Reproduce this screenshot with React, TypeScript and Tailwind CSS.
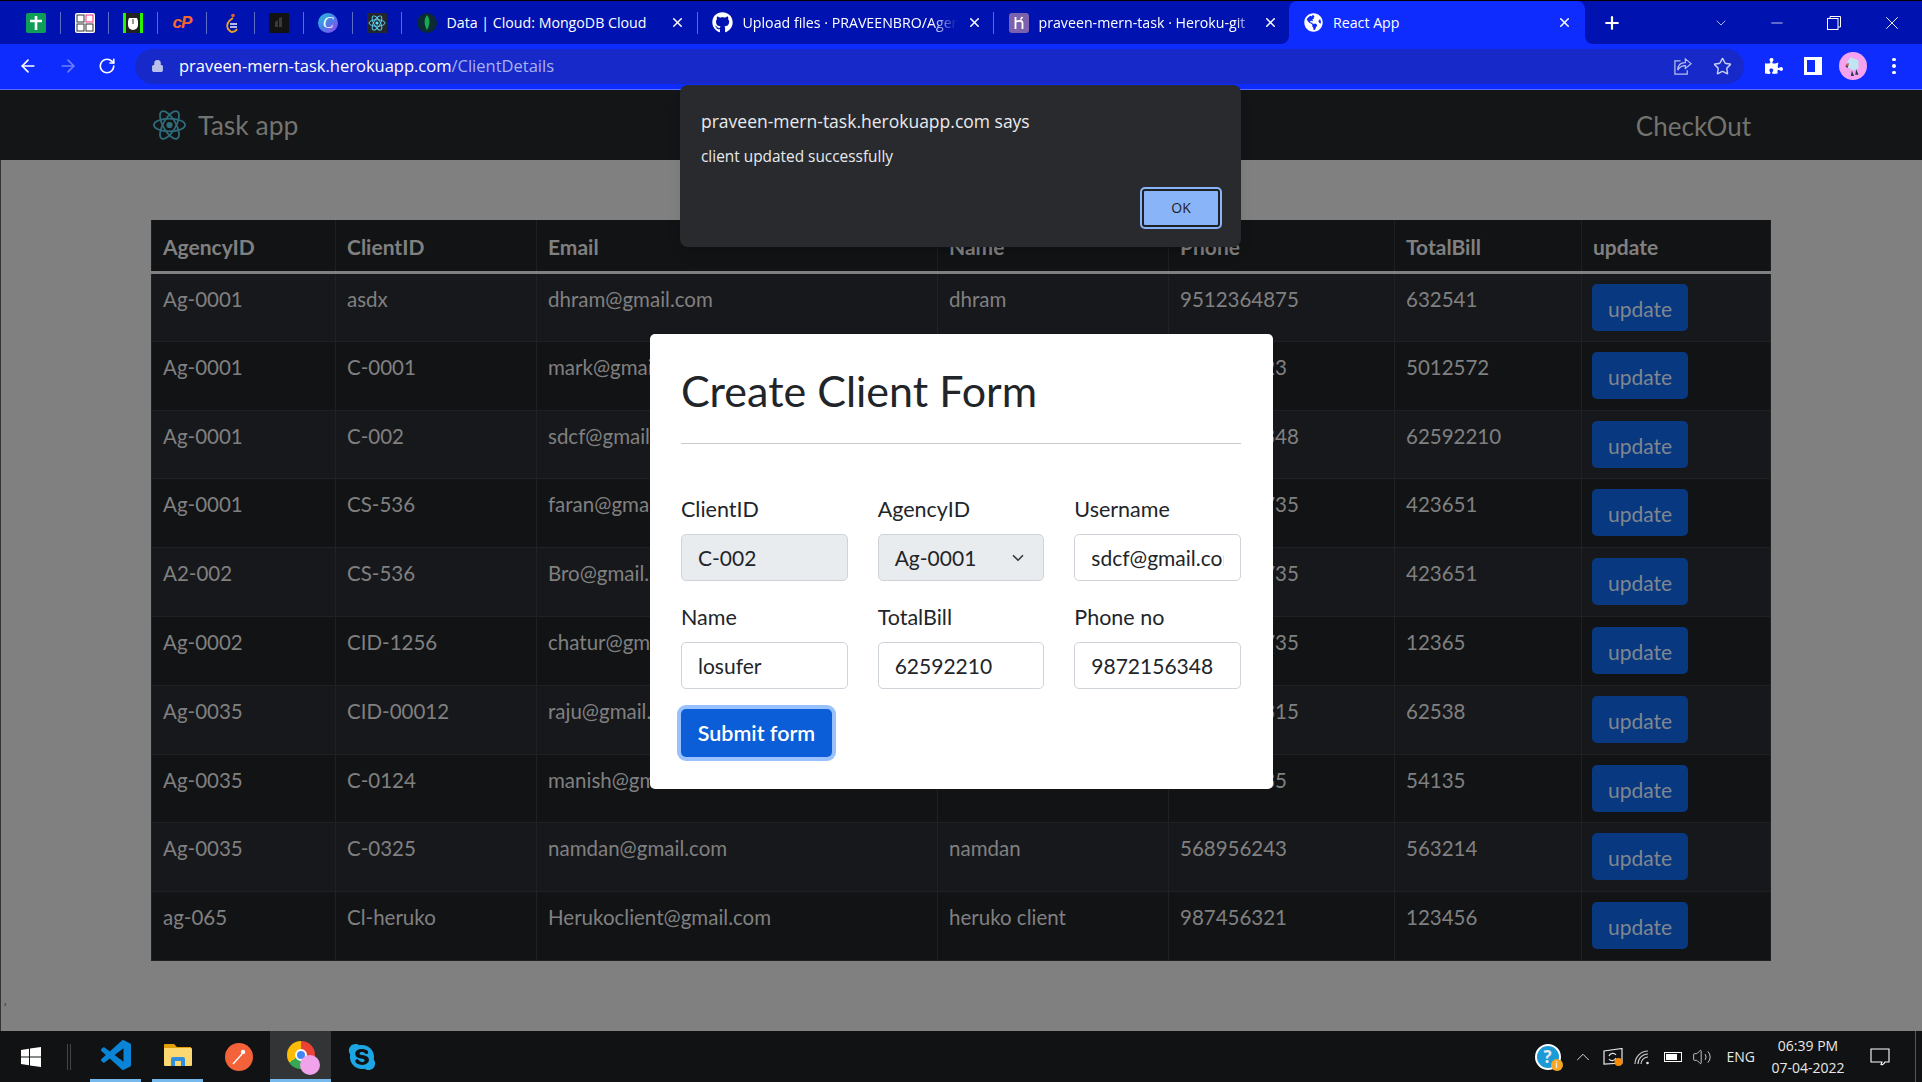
import { ArrowLeft, ArrowRight, ChevronDown, ChevronUp, Lock, Minus, Plus, RotateCw, Star, Volume2, X } from 'lucide-react'
import { FaGithub, FaGlobeAmericas, FaPuzzlePiece, FaSkype } from 'react-icons/fa'

const rows = [
  ['Ag-0001', 'asdx', 'dhram@gmail.com', 'dhram', '9512364875', '632541'],
  ['Ag-0001', 'C-0001', 'mark@gmail.com', 'mark', '987654323', '5012572'],
  ['Ag-0001', 'C-002', 'sdcf@gmail.com', 'losufer', '9872156348', '62592210'],
  ['Ag-0001', 'CS-536', 'faran@gmail.com', 'faran', '9856214735', '423651'],
  ['A2-002', 'CS-536', 'Bro@gmail.com', 'bro', '9856214735', '423651'],
  ['Ag-0002', 'CID-1256', 'chatur@gmail.com', 'chatur', '9856214735', '12365'],
  ['Ag-0035', 'CID-00012', 'raju@gmail.com', 'raju', '9856214315', '62538'],
  ['Ag-0035', 'C-0124', 'manish@gmail.com', 'manish', '985621435', '54135'],
  ['Ag-0035', 'C-0325', 'namdan@gmail.com', 'namdan', '568956243', '563214'],
  ['ag-065', 'Cl-heruko', 'Herukoclient@gmail.com', 'heruko client', '987456321', '123456'],
]

const headers = ['AgencyID', 'ClientID', 'Email', 'Name', 'Phone', 'TotalBill', 'update']

function Atom({ color, className }: { color: string; className?: string }) {
  return (
    <svg viewBox="0 0 36 36" className={className} fill="none" stroke={color} strokeWidth="1.8">
      <ellipse cx="18" cy="18" rx="16" ry="6.5" />
      <ellipse cx="18" cy="18" rx="16" ry="6.5" transform="rotate(60 18 18)" />
      <ellipse cx="18" cy="18" rx="16" ry="6.5" transform="rotate(120 18 18)" />
      <circle cx="18" cy="18" r="3.2" fill={color} stroke="none" />
    </svg>
  )
}

function PinnedTab({ children }: { children: React.ReactNode }) {
  return (
    <div className="flex h-[22px] w-[48.7px] items-center justify-center border-r border-[#5f6bc8]">
      {children}
    </div>
  )
}

function PinnedIcons() {
  return (
    <>
      <PinnedTab>
        <svg viewBox="0 0 20 20" className="h-5 w-5">
          <rect width="20" height="20" rx="2" fill="#0f9d58" />
          <path d="M10 3v14M4 8h12" stroke="#fff" strokeWidth="2.6" />
        </svg>
      </PinnedTab>
      <PinnedTab>
        <svg viewBox="0 0 20 20" className="h-5 w-5">
          <rect width="20" height="20" rx="2" fill="#fff" />
          <rect x="2" y="2" width="7" height="7" fill="none" stroke="#333" />
          <rect x="11" y="2" width="7" height="7" fill="none" stroke="#ef2d8a" />
          <rect x="2" y="11" width="7" height="7" fill="none" stroke="#333" />
          <rect x="11" y="11" width="7" height="7" fill="none" stroke="#333" />
        </svg>
      </PinnedTab>
      <PinnedTab>
        <svg viewBox="0 0 20 20" className="h-5 w-5">
          <rect width="20" height="20" fill="#27f500" />
          <rect x="3" y="0" width="14" height="20" fill="#222" />
          <path d="M5 8l1-3h8l1 3v4a5 5 0 0 1-10 0z" fill="#fff" />
          <path d="M10 6v5" stroke="#333" />
        </svg>
      </PinnedTab>
      <PinnedTab>
        <span className="font-['Liberation_Sans',sans-serif] text-[17px] leading-5 font-bold tracking-[-1px] text-[#f4692b] italic">cP</span>
      </PinnedTab>
      <PinnedTab>
        <svg viewBox="0 0 20 20" className="h-5 w-5" fill="none" strokeWidth="1.8">
          <circle cx="12" cy="2.5" r="1.8" fill="#e2622b" />
          <path d="M12 5C7 8 5 12 7 16l3 3" stroke="#f0a323" />
          <path d="M9 11h7" stroke="#c9d0f0" />
          <path d="M9 14h7" stroke="#c9d0f0" />
          <path d="M10 19c3 0 5-1 6-3" stroke="#e8a020" />
        </svg>
      </PinnedTab>
      <PinnedTab>
        <svg viewBox="0 0 20 20" className="h-5 w-5">
          <rect width="20" height="20" fill="#121212" />
          <path d="M6 9l3-2v7H6zM10 5l3-1v10h-3z" fill="#3a3a3a" />
        </svg>
      </PinnedTab>
      <PinnedTab>
        <div className="flex h-5 w-5 items-center justify-center rounded-full bg-gradient-to-br from-[#18c4d6] via-[#4a7ce8] to-[#8a3ff0] font-['Liberation_Serif',serif] text-[16px] leading-5 text-white italic">
          C
        </div>
      </PinnedTab>
      <PinnedTab>
        <div className="flex h-5 w-5 items-center justify-center bg-[#23272b]">
          <Atom color="#61dafb" className="h-[18px] w-[18px]" />
        </div>
      </PinnedTab>
    </>
  )
}

function TabClose() {
  return <X className="h-[15px] w-[15px] shrink-0 text-white" strokeWidth={2.4} />
}

function TabStrip() {
  return (
    <div className="flex h-[44px] border-t border-black bg-[#0f2cff]">
      <div className="flex h-full w-[1289px] items-center rounded-br-lg bg-[#0013b0] pl-3 font-['Open_Sans',sans-serif] text-[14.2px] text-white">
        <PinnedIcons />
        <div className="flex h-[22px] w-[296px] items-center border-r border-[#5f6bc8] pl-[15px]">
          <div className="flex h-5 w-5 items-center justify-center rounded-full bg-[#0b2a33]">
            <svg viewBox="0 0 10 20" className="h-4 w-2">
              <path d="M5 0c4 5 4 12 0 19C1 12 1 5 5 0z" fill="#13aa52" />
            </svg>
          </div>
          <span className="ml-[10px] w-[210px] truncate">Data | Cloud: MongoDB Cloud</span>
          <div className="ml-[13px]"><TabClose /></div>
        </div>
        <div className="flex h-[22px] w-[296px] items-center border-r border-[#5f6bc8] pl-[14px]">
          <FaGithub className="h-[21px] w-[21px] shrink-0" />
          <span className="ml-[10px] w-[214px] overflow-hidden whitespace-nowrap [mask-image:linear-gradient(to_right,black_88%,transparent)]">Upload files · PRAVEENBRO/Agency</span>
          <div className="ml-[10px]"><TabClose /></div>
        </div>
        <div className="flex h-[22px] w-[295px] items-center pl-[15px]">
          <svg viewBox="0 0 20 20" className="h-5 w-5 shrink-0">
            <rect width="20" height="20" rx="3" fill="#7c62ad" />
            <path d="M6.5 4v12M6.5 9c3-1.500 7-1.500 7 1v6M13.500 4l-2 2.500" stroke="#fff" strokeWidth="1.800" fill="none" />
          </svg>
          <span className="ml-[10px] w-[214px] overflow-hidden whitespace-nowrap [mask-image:linear-gradient(to_right,black_92%,transparent)]">praveen-mern-task · Heroku-git</span>
          <div className="ml-[10px]"><TabClose /></div>
        </div>
      </div>
      <div className="h-full w-[296px] bg-[#0013b0]">
        <div className="flex h-full items-center rounded-t-lg bg-[#0f2cff] pl-[15px] font-['Open_Sans',sans-serif] text-[14.2px] text-white">
          <FaGlobeAmericas className="h-[19px] w-[19px]" />
          <span className="ml-[10px] w-[224px]">React App</span>
          <TabClose />
        </div>
      </div>
      <div className="flex h-full flex-1 items-center rounded-bl-lg bg-[#0013b0] text-white">
        <Plus className="ml-[17px] h-[20px] w-[20px]" strokeWidth={2.6} />
        <ChevronDown className="ml-[89px] h-[16px] w-[20px] text-[#dfe3fa]" strokeWidth={1.200} />
        <Minus className="ml-[37px] h-[18px] w-[18px]" strokeWidth={1} />
        <svg viewBox="0 0 14 14" className="ml-[41px] h-[14px] w-[14px]" fill="none" stroke="#fff">
          <rect x="0.5" y="2.500" width="10.500" height="11" />
          <path d="M3 2.500V0.500h10.500V11H11" />
        </svg>
        <X className="ml-[40px] h-[22px] w-[22px]" strokeWidth={1} />
      </div>
    </div>
  )
}

function Toolbar() {
  return (
    <div className="flex h-[46px] items-center border-b border-[#5c6cff] bg-[#0f2cff] pb-[1px] text-white">
      <ArrowLeft className="ml-[18px] h-[20px] w-[20px]" strokeWidth={2} />
      <ArrowRight className="ml-[20px] h-[20px] w-[20px] text-[#6f80ff]" strokeWidth={2} />
      <RotateCw className="ml-[20px] h-[18px] w-[18px]" strokeWidth={2.2} />
      <div className="ml-[19px] flex h-[35px] w-[1609px] items-center rounded-full bg-[#1729c9] font-['Open_Sans',sans-serif] text-[16.5px]">
        <Lock className="ml-[16px] h-[14px] w-[13px] fill-[#b9c0ea] text-[#b9c0ea]" />
        <span className="ml-[15px]">praveen-mern-task.herokuapp.com</span>
        <span className="text-[#a9b2ee]">/ClientDetails</span>
        <svg viewBox="0 0 20 20" className="ml-auto h-[19px] w-[19px]" fill="none" stroke="#b9c0ea" strokeWidth="1.300">
          <path d="M13 2l6 5-6 5V9c-4 0-6 1-8 5 0-5 3-8 8-8z" />
          <path d="M8 4H2v14h13v-4" />
        </svg>
        <Star className="mr-[12px] ml-[21px] h-[19px] w-[19px] text-[#c9cfee]" strokeWidth={1.800} />
      </div>
      <FaPuzzlePiece className="ml-[21px] h-[18px] w-[18px]" />
      <div className="ml-[21px] flex h-[18px] w-[18px] justify-end border-[3px] border-r-[7px] border-white bg-[#0f2cff]" />
      <div className="ml-[17px] flex h-[28px] w-[28px] items-center justify-center rounded-full bg-[#f5a3ee]">
        <svg viewBox="0 0 20 20" className="h-[22px] w-[22px]">
          <path d="M8 2l7 3v7l-5 2-5-3V6z" fill="#bfe6f2" />
          <path d="M6 7l-3 3 2 2zM9 14l-1 5h3zM13 13l2 5h-3z" fill="#2b3a55" />
          <rect x="4" y="8" width="2" height="2" fill="#e5533d" />
        </svg>
      </div>
      <div className="ml-[25px] flex flex-col gap-[3px]">
        <div className="h-[3.500px] w-[3.500px] rounded-full bg-white" />
        <div className="h-[3.500px] w-[3.500px] rounded-full bg-white" />
        <div className="h-[3.500px] w-[3.500px] rounded-full bg-white" />
      </div>
    </div>
  )
}

function Navbar() {
  return (
    <div className="flex h-[70px] items-center bg-[#141516] pr-[171px] pl-[152px] font-['Lato',sans-serif] text-[26.5px] text-[#73736f]">
      <Atom color="#2f6c7c" className="h-[36px] w-[35px]" />
      <span className="mt-[2px] ml-[11px]">Task app</span>
      <span className="mt-[2px] ml-auto text-[26px]">CheckOut</span>
    </div>
  )
}

function ClientTable() {
  return (
    <table className="w-[1619px] table-fixed border-collapse font-['Lato',sans-serif] text-[20.5px] text-[#808080]">
      <colgroup>
        <col className="w-[184px]" />
        <col className="w-[201px]" />
        <col className="w-[401px]" />
        <col className="w-[231px]" />
        <col className="w-[226px]" />
        <col className="w-[187px]" />
        <col className="w-[189px]" />
      </colgroup>
      <thead>
        <tr className="h-[52px] border-b-[3px] border-[#808080] bg-[#121315]">
          {headers.map((h) => (
            <th key={h} className="border-x border-[#1d1f21] px-[11px] pt-[3px] text-left text-[21px] leading-[30px] font-bold">{h}</th>
          ))}
        </tr>
      </thead>
      <tbody>
        {rows.map((row, i) => (
          <tr key={i} className={`border-b border-[#1f2124] ${i % 5 === 2 ? 'h-[68px]' : 'h-[69px]'} ${i % 2 === 0 ? 'bg-[#17181b]' : 'bg-[#121315]'}`}>
            {row.map((cell, j) => (
              <td key={j} className="truncate border-x border-[#1f2124] px-[11px] pt-[10px] pb-[20px] align-top leading-[30px]">{cell}</td>
            ))}
            <td className="border-x border-[#1f2124] px-[10px] align-top">
              <button className="mt-[10px] h-[47px] w-[96px] rounded-[5px] bg-[#073880] pt-[3px] text-[21px] text-[#80868f]">update</button>
            </td>
          </tr>
        ))}
      </tbody>
    </table>
  )
}

function FieldLabel({ text }: { text: string }) {
  return <label className="mb-[11px] block text-[21.5px] leading-[28px] text-[#212529]">{text}</label>
}

function Field({ label, value, disabled }: { label: string; value: string; disabled?: boolean }) {
  return (
    <div>
      <FieldLabel text={label} />
      <input
        readOnly
        value={value}
        className={`h-[47px] w-full rounded-[5px] border border-[#ced4da] px-[16px] text-[21px] text-[#212529] outline-none ${disabled ? 'bg-[#e9ecef]' : 'bg-white'}`}
      />
    </div>
  )
}

function ClientForm() {
  return (
    <div className="absolute top-[334px] left-[650px] h-[455px] w-[623px] rounded-[5px] bg-white pt-[27px] pr-[32px] pl-[31px] font-['Lato',sans-serif]">
      <h1 className="text-[43px] leading-[60px] text-[#212529]">Create Client Form</h1>
      <hr className="mt-[22px] border-t border-[#c8cacc]" />
      <div className="mt-[51px] grid grid-cols-3 gap-x-[30px] gap-y-[22px]">
        <Field label="ClientID" value="C-002" disabled />
        <div>
          <FieldLabel text="AgencyID" />
          <div className="flex h-[47px] items-center justify-between rounded-[5px] border border-[#ced4da] bg-[#e9ecef] pr-[16px] pl-[16px] text-[21px] text-[#212529]">
            <span>Ag-0001</span>
            <ChevronDown className="h-[18px] w-[18px] text-[#343a40]" strokeWidth={2.2} />
          </div>
        </div>
        <Field label="Username" value="sdcf@gmail.com" />
        <Field label="Name" value="losufer" />
        <Field label="TotalBill" value="62592210" />
        <Field label="Phone no" value="9872156348" />
      </div>
      <button className="mt-[20px] h-[48px] w-[151px] rounded-[5px] bg-[#0b5ed7] text-[21.5px] font-semibold text-white ring-4 ring-[#98c1fe]">
        Submit form
      </button>
    </div>
  )
}

function AlertBox() {
  return (
    <div className="absolute top-[85px] left-[680px] h-[162px] w-[561px] rounded-lg bg-[#292a2d] px-[21px] font-['Open_Sans',sans-serif] text-[#e8eaed] shadow-lg">
      <p className="mt-[24px] text-[17.5px] leading-[24px]">praveen-mern-task.herokuapp.com says</p>
      <p className="mt-[12px] text-[15.4px] leading-[24px]">client updated successfully</p>
      <button className="absolute top-[104px] right-[21px] h-[38px] w-[78px] rounded-[3px] border-2 border-[#202124] bg-[#8ab4f8] pb-[2px] text-[14px] text-[#202124] ring-2 ring-[#8ab4f8]">
        OK
      </button>
    </div>
  )
}

function Taskbar() {
  return (
    <div className="flex h-[51px] items-center bg-[#111213] text-white">
      <svg viewBox="0 0 20 20" className="ml-[21px] h-[20px] w-[20px]" fill="#fff">
        <path d="M0 3l8-1.200V9.500H0zM9 1.600L20 0v9.500H9zM0 10.500h8v7.700L0 17zM9 10.500h11V20L9 18.400z" />
      </svg>
      <div className="ml-[26px] h-[26px] w-[4px] border-x border-[#444]" />
      <div className="ml-[19px] flex h-full w-[51px] items-center justify-center border-b-[3px] border-[#76b9ed]">
        <svg viewBox="0 0 24 24" className="h-[30px] w-[30px]" fill="#0a84d6">
          <path d="M23.15 2.587L18.21.21a1.494 1.494 0 0 0-1.705.29l-9.46 8.63-4.12-3.128a.999.999 0 0 0-1.276.057L.327 7.261A1 1 0 0 0 .326 8.74L3.899 12 .326 15.26a1 1 0 0 0 .001 1.479L1.65 17.94a.999.999 0 0 0 1.276.057l4.12-3.128 9.46 8.63a1.492 1.492 0 0 0 1.704.29l4.942-2.377A1.5 1.5 0 0 0 24 20.06V3.939a1.5 1.5 0 0 0-.85-1.352zm-5.146 14.861L10.826 12l7.178-5.448v10.896z" />
        </svg>
      </div>
      <div className="ml-[11px] flex h-full w-[51px] items-center justify-center border-b-[3px] border-[#76b9ed]">
        <svg viewBox="0 0 28 24" className="h-[24px] w-[28px]">
          <path d="M0 2a1 1 0 0 1 1-1h9l3 3h14v5H0z" fill="#e3a008" />
          <rect y="5" width="28" height="18" rx="1" fill="#fcd873" />
          <path d="M7 23v-7a2 2 0 0 1 2-2h10a2 2 0 0 1 2 2v7h-4v-5h-6v5z" fill="#2f8fdd" />
        </svg>
      </div>
      <div className="ml-[9px] flex h-full w-[54px] items-center justify-center">
        <div className="flex h-[28px] w-[28px] items-center justify-center rounded-full bg-[#f4623a]">
          <svg viewBox="0 0 20 20" className="h-[20px] w-[20px]" fill="none" stroke="#fff" strokeWidth="1.400">
            <path d="M4 17l9-10" />
            <circle cx="14" cy="5" r="2.200" fill="#fff" stroke="none" />
          </svg>
        </div>
      </div>
      <div className="ml-[4px] flex h-full w-[61px] items-center justify-center border-b-[3px] border-[#76b9ed] bg-[#333435]">
        <div className="relative h-[28px] w-[28px] rounded-full bg-[conic-gradient(#ea4335_0_33%,#34a853_33%_66%,#fbbc05_66%)]">
          <div className="absolute top-[8px] left-[8px] h-[12px] w-[12px] rounded-full border-2 border-white bg-[#4285f4]" />
          <div className="absolute -right-[5px] -bottom-[6px] h-[20px] w-[20px] rounded-full bg-[#f0a3ea]" />
        </div>
      </div>
      <div className="ml-[16px] flex h-[30px] w-[30px] items-center justify-center rounded-full">
        <FaSkype className="h-[30px] w-[30px] text-[#1ca6e6]" />
      </div>
      <div className="ml-auto flex h-full items-center font-['Open_Sans',sans-serif] text-[#e8e8e8]">
        <div className="relative flex h-[26px] w-[26px] items-center justify-center rounded-full border-2 border-white bg-[#1a9ad6] text-[17px] font-bold">
          ?
          <div className="absolute -right-[4px] -bottom-[3px] flex h-[12px] w-[12px] items-center justify-center rounded-full bg-[#f5a623] text-[9px] leading-none">i</div>
        </div>
        <ChevronUp className="ml-[11px] h-[22px] w-[22px]" strokeWidth={1} />
        <svg viewBox="0 0 20 18" className="ml-[9px] h-[18px] w-[20px]" fill="none" stroke="#e8e8e8" strokeWidth="1.200">
          <path d="M1 3l18-2.500V15L1 16z" />
          <path d="M6 8a4 4 0 0 1 7-1M13 10a4 4 0 0 1-7 1" />
          <circle cx="15.500" cy="14" r="4" fill="#f98b00" stroke="none" />
        </svg>
        <svg viewBox="0 0 18 16" className="ml-[11px] h-[16px] w-[18px]" fill="none" stroke="#c9c9c9" strokeWidth="1.200">
          <path d="M1 15A13 13 0 0 1 14 2M4 15A10 10 0 0 1 14 5M7 15a7 7 0 0 1 7-7" />
          <circle cx="13.500" cy="14" r="1.300" fill="#e8e8e8" stroke="none" />
        </svg>
        <div className="ml-[12px] flex h-[10px] w-[18px] items-center border border-white p-[1px]">
          <div className="h-full w-[11px] bg-white" />
        </div>
        <Volume2 className="ml-[10px] h-[20px] w-[20px]" strokeWidth={1} />
        <span className="ml-[15px] text-[14px]">ENG</span>
        <div className="ml-[13px] w-[80px] text-center text-[14px] leading-[22px]">
          <div>06:39 PM</div>
          <div>07-04-2022</div>
        </div>
        <svg viewBox="0 0 20 18" className="ml-[22px] h-[18px] w-[20px]" fill="none" stroke="#fff" strokeWidth="1.100">
          <path d="M1 1h18v13h-4c-1 2-3 3-4 2.500l1-2.500H1z" />
        </svg>
        <div className="ml-[25px] h-full w-[7px] border-l border-[#555]" />
      </div>
    </div>
  )
}

function App() {
  return (
    <div className="relative flex h-[1082px] w-[1922px] flex-col overflow-hidden">
      <TabStrip />
      <Toolbar />
      <Navbar />
      <main className="flex-1 border-l border-[#333] bg-[#808080] pt-[60px] pl-[150px]">
        <ClientTable />
        <div className="mt-[34px] -ml-[147px] text-[10px] leading-3 text-[#333]">,</div>
      </main>
      <Taskbar />
      <ClientForm />
      <AlertBox />
    </div>
  )
}

export default App
